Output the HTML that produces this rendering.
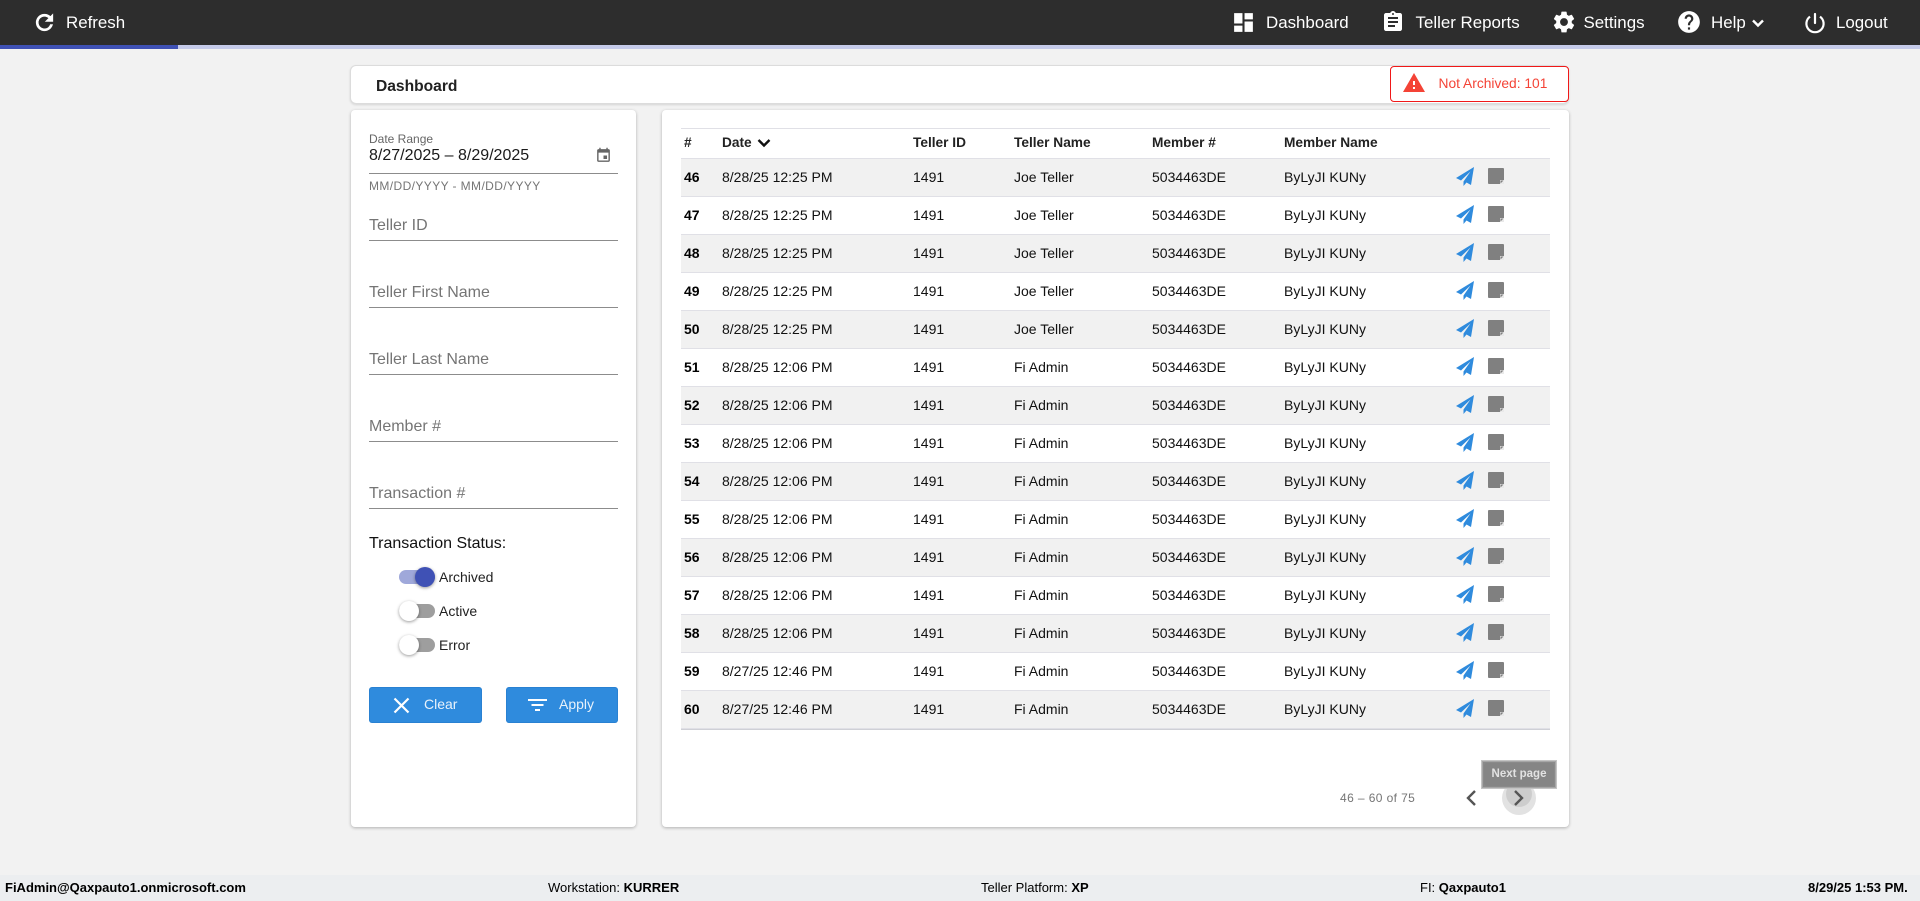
<!DOCTYPE html>
<html><head><meta charset="utf-8"><title>Dashboard</title>
<style>
html,body{margin:0;padding:0;width:1920px;height:901px;overflow:hidden;background:#f2f2f2;font-family:"Liberation Sans",Arial,sans-serif;color:#000}
.a{position:absolute;white-space:nowrap}
.nav{font-size:16.9px;color:#fff;line-height:24px;top:11px}
svg{position:absolute;display:block}
.card{position:absolute;background:#fff;border-radius:4px;box-shadow:0 1px 3px rgba(0,0,0,.28)}
.ph{left:369px;width:249px;font-size:16px;line-height:20px;color:#757575}
.ln{position:absolute;left:369px;width:249px;height:1px;background:#8c8c8c}
.tr{position:absolute;width:36px;height:14px;border-radius:7px;left:399px;background:#9e9e9e}
.th{position:absolute;width:20px;height:20px;border-radius:50%;background:#fff;box-shadow:0 1px 3px rgba(0,0,0,.4)}
.tl{left:439px;font-size:14px;line-height:18px;color:#222}
.btn{position:absolute;top:687px;height:36px;background:#2f8bdd;border-radius:3px;box-shadow:inset 0 0 0 1px rgba(0,60,130,.12)}
table{position:absolute;left:681px;top:128px;width:869px;border-collapse:collapse;table-layout:fixed;font-size:14px}
th{height:27px;padding:0 0 2px 3px;text-align:left;font-size:13.7px;font-weight:bold;color:#222;border-top:1px solid #e0e0e6;border-bottom:1px solid #e0e0e6}
td{height:35px;padding:0 0 2px 3px;border-bottom:1px solid #e0e0e6;color:#111;position:relative;white-space:nowrap}
tbody tr:nth-child(odd) td{background:#f1f1f1}
td:first-child{font-weight:bold;color:#000}
td svg{left:0;top:0}
.foot{position:absolute;left:0;top:875px;width:1920px;height:26px;background:#eceef0;font-size:13px;line-height:26px;color:#000}
</style></head><body>
<svg width="0" height="0" style="position:absolute"><defs>
<g id="ic"><path fill="#2f8bdd" d="M24 8 L6 19 L11 21.500 L20.500 12.500 L13.500 22.500 L13.500 27 L16.500 23.500 L21 26 Z"/><rect x="38" y="9" width="16" height="16" rx="1" fill="#808080"/><rect x="50" y="21" width="4" height="4" fill="#e9e9e9"/><path fill="#808080" d="M50.500 24.500v-3h3z"/></g>
</defs></svg>

<div class="a" style="left:0;top:0;width:1920px;height:45px;background:#2d2d2d"></div>
<div class="a" style="left:0;top:45px;width:1920px;height:4px;background:#c5cae9"></div>
<div class="a" style="left:0;top:45px;width:178px;height:4px;background:#3f51b5"></div>

<svg style="left:32px;top:10px" width="25" height="25" viewBox="0 0 24 24"><path fill="#fff" stroke="#fff" stroke-width=".6" d="M17.650 6.350C16.200 4.900 14.210 4 12 4c-4.420 0-7.990 3.580-7.990 8s3.570 8 7.990 8c3.730 0 6.840-2.550 7.730-6h-2.080c-.820 2.330-3.040 4-5.650 4-3.310 0-6-2.690-6-6s2.690-6 6-6c1.660 0 3.140.690 4.220 1.780L13 11h7V4l-2.350 2.350z"/></svg>
<div class="a nav" style="left:66px">Refresh</div>

<svg style="left:1231px;top:10px" width="25" height="25" viewBox="0 0 24 24"><path fill="#fff" d="M3 13h8V3H3v10zm0 8h8v-6H3v6zm10 0h8V11h-8v10zm0-18v6h8V3h-8z"/></svg>
<div class="a nav" style="left:1266px">Dashboard</div>
<svg style="left:1381px;top:10px" width="24" height="24" viewBox="0 0 24 24"><path fill="#fff" d="M19 3h-4.180C14.400 1.840 13.300 1 12 1c-1.300 0-2.400.840-2.820 2H5c-1.100 0-2 .900-2 2v14c0 1.100.900 2 2 2h14c1.100 0 2-.900 2-2V5c0-1.100-.900-2-2-2zm-7 0c.550 0 1 .450 1 1s-.450 1-1 1-1-.450-1-1 .450-1 1-1zm2 14H7v-2h7v2zm3-4H7v-2h10v2zm0-4H7V7h10v2z"/></svg>
<div class="a nav" style="left:1415.500px">Teller Reports</div>
<svg style="left:1551px;top:9px" width="26" height="26" viewBox="0 0 24 24"><path fill="#fff" d="M19.140 12.940c.040-.300.060-.610.060-.940 0-.320-.020-.640-.070-.940l2.030-1.580c.180-.140.230-.410.120-.610l-1.920-3.320c-.120-.220-.370-.290-.590-.220l-2.390.960c-.500-.380-1.030-.700-1.620-.940l-.360-2.540c-.040-.240-.240-.410-.480-.410h-3.840c-.240 0-.430.170-.470.410l-.360 2.540c-.590.240-1.130.570-1.620.940l-2.390-.960c-.220-.080-.470 0-.590.220L2.740 8.870c-.120.210-.080.470.120.610l2.030 1.580c-.050.300-.090.630-.090.940s.020.640.070.940l-2.030 1.580c-.180.140-.230.410-.120.610l1.920 3.320c.120.220.370.290.590.220l2.390-.960c.500.380 1.030.700 1.620.940l.360 2.540c.050.240.240.410.480.410h3.840c.240 0 .440-.170.470-.410l.360-2.540c.590-.240 1.130-.560 1.620-.940l2.390.960c.220.080.470 0 .590-.220l1.920-3.320c.120-.220.070-.470-.120-.610l-2.010-1.580zM12 15.600c-1.980 0-3.600-1.620-3.600-3.600s1.620-3.600 3.600-3.600 3.600 1.620 3.600 3.600-1.620 3.600-3.600 3.600z"/></svg>
<div class="a nav" style="left:1583.500px">Settings</div>
<svg style="left:1676px;top:9px" width="26" height="26" viewBox="0 0 24 24"><path fill="#fff" d="M12 2C6.480 2 2 6.480 2 12s4.480 10 10 10 10-4.480 10-10S17.520 2 12 2zm1 17h-2v-2h2v2zm2.070-7.750l-.900.920C13.450 12.900 13 13.500 13 15h-2v-.500c0-1.100.450-2.100 1.170-2.830l1.240-1.260c.370-.360.590-.860.590-1.410 0-1.100-.900-2-2-2s-2 .900-2 2H8c0-2.210 1.790-4 4-4s4 1.790 4 4c0 .880-.360 1.680-.930 2.250z"/></svg>
<div class="a nav" style="left:1711px">Help</div>
<svg style="left:1750px;top:17px" width="16" height="12" viewBox="0 0 16 12"><path fill="none" stroke="#fff" stroke-width="2.400" d="M3 3.500l5 5 5-5"/></svg>
<svg style="left:1803px;top:11px" width="24" height="24" viewBox="0 0 24 24"><path fill="none" stroke="#fff" stroke-width="2.200" stroke-linecap="round" d="M12 3v9"/><path fill="none" stroke="#fff" stroke-width="2.200" d="M7 5.600a8.600 8.600 0 1 0 10 0"/></svg>
<div class="a nav" style="left:1836px">Logout</div>

<div class="a" style="left:350px;top:65px;width:1217px;height:37px;background:#fff;border:1px solid #dcdcdc;border-radius:6px;box-shadow:0 1px 2px rgba(0,0,0,.12)"></div>
<div class="a" style="left:376px;top:78px;font-size:15.600px;font-weight:bold;line-height:18px;color:#212121">Dashboard</div>
<div class="a" style="left:1390px;top:66px;width:177px;height:34px;background:#fff;border:1.500px solid #f01818;border-radius:4px"></div>
<svg style="left:1402px;top:71px" width="24" height="24" viewBox="0 0 24 24"><path fill="#f44336" d="M1 21h22L12 2 1 21zm12-3h-2v-2h2v2zm0-4h-2v-4h2v4z"/></svg>
<div class="a" style="left:1438.500px;top:75px;font-size:13.800px;line-height:18px;color:#f44336">Not Archived: 101</div>

<div class="card" style="left:351px;top:110px;width:285px;height:717px"></div>
<div class="card" style="left:662px;top:110px;width:907px;height:717px"></div>

<div class="a" style="left:369px;top:132px;font-size:12px;line-height:14px;color:#666">Date Range</div>
<div class="a" style="left:369px;top:146px;font-size:16px;line-height:20px;color:#1a1a1a">8/27/2025 – 8/29/2025</div>
<svg style="left:595px;top:147px" width="17" height="17" viewBox="0 0 24 24"><path fill="#666" d="M17 12h-5v5h5v-5zM16 1v2H8V1H6v2H5c-1.110 0-1.990.900-1.990 2L3 19c0 1.100.890 2 2 2h14c1.100 0 2-.900 2-2V5c0-1.100-.900-2-2-2h-1V1h-2zm3 18H5V8h14v11z"/></svg>
<div class="ln" style="top:173px"></div>
<div class="a" style="left:369px;top:179px;font-size:12px;letter-spacing:.4px;line-height:14px;color:#757575">MM/DD/YYYY - MM/DD/YYYY</div>

<div class="a ph" style="top:216px">Teller ID</div><div class="ln" style="top:240px"></div>
<div class="a ph" style="top:283px">Teller First Name</div><div class="ln" style="top:307px"></div>
<div class="a ph" style="top:350px">Teller Last Name</div><div class="ln" style="top:374px"></div>
<div class="a ph" style="top:417px">Member #</div><div class="ln" style="top:441px"></div>
<div class="a ph" style="top:484px">Transaction #</div><div class="ln" style="top:508px"></div>

<div class="a" style="left:369px;top:534.500px;font-size:16px;line-height:18px;color:#111">Transaction Status:</div>

<div class="tr" style="top:570px;background:#9fa8da"></div><div class="th" style="left:415px;top:567px;background:#3f51b5"></div>
<div class="a tl" style="top:568px">Archived</div>
<div class="tr" style="top:604px"></div><div class="th" style="left:399px;top:601px"></div>
<div class="a tl" style="top:602px">Active</div>
<div class="tr" style="top:638px"></div><div class="th" style="left:399px;top:635px"></div>
<div class="a tl" style="top:636px">Error</div>

<div class="btn" style="left:369px;width:113px"></div>
<svg style="left:392px;top:696px" width="19" height="19" viewBox="0 0 19 19"><path stroke="#fff" stroke-width="2.200" fill="none" d="M2.500 2.500l14 14M16.500 2.500l-14 14"/></svg>
<div class="a" style="left:424px;top:695px;font-size:14px;line-height:18px;color:#e8f2fb">Clear</div>
<div class="btn" style="left:506px;width:112px"></div>
<svg style="left:528px;top:698px" width="19" height="14" viewBox="0 0 19 14"><path fill="#fff" d="M0 1h19v2H0zM3.500 6h12v2h-12zM7 11h5v2H7z"/></svg>
<div class="a" style="left:559px;top:695px;font-size:14px;line-height:18px;color:#e8f2fb">Apply</div>

<table>
<colgroup><col style="width:38px"><col style="width:191px"><col style="width:101px"><col style="width:138px"><col style="width:132px"><col style="width:169px"><col style="width:100px"></colgroup>
<thead><tr><th>#</th><th>Date <svg style="position:static;display:inline-block;vertical-align:-2px;margin-left:2px" width="14" height="12" viewBox="0 0 14 12"><path fill="none" stroke="#111" stroke-width="2.400" d="M1.500 3l5.500 5.500 5.500-5.500"/></svg></th><th>Teller ID</th><th>Teller Name</th><th>Member #</th><th>Member Name</th><th></th></tr></thead>
<tbody>
<tr><td>46</td><td>8/28/25 12:25 PM</td><td>1491</td><td>Joe Teller</td><td>5034463DE</td><td>ByLyJI KUNy</td><td><svg width="60" height="37"><use href="#ic"/></svg></td></tr>
<tr><td>47</td><td>8/28/25 12:25 PM</td><td>1491</td><td>Joe Teller</td><td>5034463DE</td><td>ByLyJI KUNy</td><td><svg width="60" height="37"><use href="#ic"/></svg></td></tr>
<tr><td>48</td><td>8/28/25 12:25 PM</td><td>1491</td><td>Joe Teller</td><td>5034463DE</td><td>ByLyJI KUNy</td><td><svg width="60" height="37"><use href="#ic"/></svg></td></tr>
<tr><td>49</td><td>8/28/25 12:25 PM</td><td>1491</td><td>Joe Teller</td><td>5034463DE</td><td>ByLyJI KUNy</td><td><svg width="60" height="37"><use href="#ic"/></svg></td></tr>
<tr><td>50</td><td>8/28/25 12:25 PM</td><td>1491</td><td>Joe Teller</td><td>5034463DE</td><td>ByLyJI KUNy</td><td><svg width="60" height="37"><use href="#ic"/></svg></td></tr>
<tr><td>51</td><td>8/28/25 12:06 PM</td><td>1491</td><td>Fi Admin</td><td>5034463DE</td><td>ByLyJI KUNy</td><td><svg width="60" height="37"><use href="#ic"/></svg></td></tr>
<tr><td>52</td><td>8/28/25 12:06 PM</td><td>1491</td><td>Fi Admin</td><td>5034463DE</td><td>ByLyJI KUNy</td><td><svg width="60" height="37"><use href="#ic"/></svg></td></tr>
<tr><td>53</td><td>8/28/25 12:06 PM</td><td>1491</td><td>Fi Admin</td><td>5034463DE</td><td>ByLyJI KUNy</td><td><svg width="60" height="37"><use href="#ic"/></svg></td></tr>
<tr><td>54</td><td>8/28/25 12:06 PM</td><td>1491</td><td>Fi Admin</td><td>5034463DE</td><td>ByLyJI KUNy</td><td><svg width="60" height="37"><use href="#ic"/></svg></td></tr>
<tr><td>55</td><td>8/28/25 12:06 PM</td><td>1491</td><td>Fi Admin</td><td>5034463DE</td><td>ByLyJI KUNy</td><td><svg width="60" height="37"><use href="#ic"/></svg></td></tr>
<tr><td>56</td><td>8/28/25 12:06 PM</td><td>1491</td><td>Fi Admin</td><td>5034463DE</td><td>ByLyJI KUNy</td><td><svg width="60" height="37"><use href="#ic"/></svg></td></tr>
<tr><td>57</td><td>8/28/25 12:06 PM</td><td>1491</td><td>Fi Admin</td><td>5034463DE</td><td>ByLyJI KUNy</td><td><svg width="60" height="37"><use href="#ic"/></svg></td></tr>
<tr><td>58</td><td>8/28/25 12:06 PM</td><td>1491</td><td>Fi Admin</td><td>5034463DE</td><td>ByLyJI KUNy</td><td><svg width="60" height="37"><use href="#ic"/></svg></td></tr>
<tr><td>59</td><td>8/27/25 12:46 PM</td><td>1491</td><td>Fi Admin</td><td>5034463DE</td><td>ByLyJI KUNy</td><td><svg width="60" height="37"><use href="#ic"/></svg></td></tr>
<tr><td>60</td><td>8/27/25 12:46 PM</td><td>1491</td><td>Fi Admin</td><td>5034463DE</td><td>ByLyJI KUNy</td><td><svg width="60" height="37"><use href="#ic"/></svg></td></tr>
</tbody></table>
<div class="a" style="left:681px;top:729px;width:869px;height:1px;background:#cfd0d6"></div>

<div class="a" style="left:1340px;top:791px;font-size:12px;letter-spacing:.4px;line-height:14px;color:#757575">46 – 60 of 75</div>
<svg style="left:1463px;top:788px" width="16" height="20" viewBox="0 0 16 20"><path fill="none" stroke="#555" stroke-width="2.400" d="M12 3l-7 7 7 7"/></svg>
<div class="a" style="left:1502px;top:781px;width:34px;height:34px;border-radius:50%;background:#e2e2e2"></div>
<div class="a" style="left:1506px;top:781px;width:26px;height:26px;border-radius:50%;background:#cdcdcd"></div>
<svg style="left:1511px;top:788px" width="16" height="20" viewBox="0 0 16 20"><path fill="none" stroke="#555" stroke-width="2.400" d="M4 3l7 7-7 7"/></svg>
<div class="a" style="left:1481px;top:760px;width:76px;height:29px;box-sizing:border-box;background:#8a8a8a;border:1px solid #c4c4c4;box-shadow:inset 0 0 0 1px #a6a6a6"></div>
<div class="a" style="left:1484px;top:763px;width:70px;height:23px;line-height:23px;text-align:center;background:#858585;border-radius:3px;font-size:11.500px;font-weight:bold;color:#e2e2e2">Next page</div>

<div class="foot">
<div class="a" style="left:5px;top:0;font-weight:bold">FiAdmin@Qaxpauto1.onmicrosoft.com</div>
<div class="a" style="left:548px;top:0">Workstation: <b>KURRER</b></div>
<div class="a" style="left:981px;top:0">Teller Platform: <b>XP</b></div>
<div class="a" style="left:1420px;top:0">FI: <b>Qaxpauto1</b></div>
<div class="a" style="left:1808px;top:0;font-weight:bold">8/29/25 1:53 PM.</div>
</div>
</body></html>
